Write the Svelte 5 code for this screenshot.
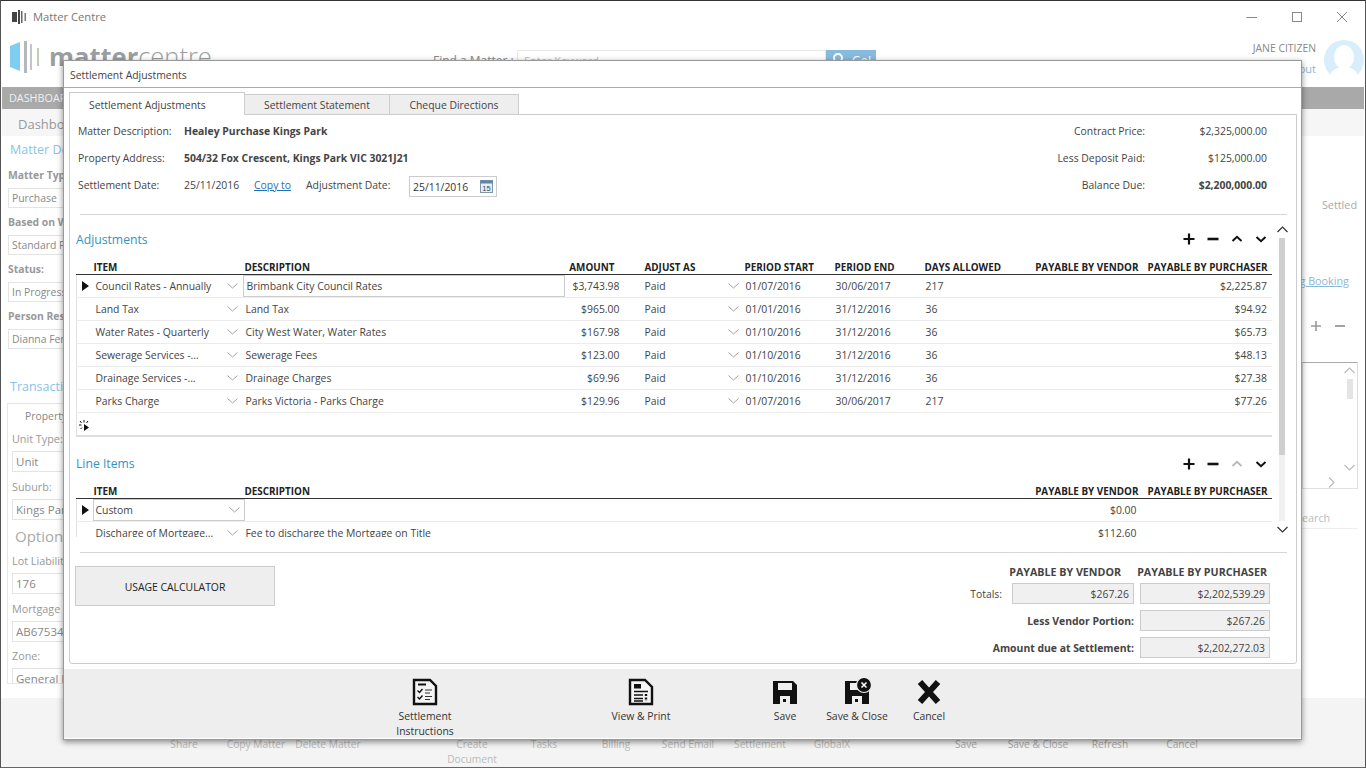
<script>
    const adjustments = [
        {item:'Council Rates - Annually', desc:'Brimbank City Council Rates', amount:'$3,743.98', start:'01/07/2016', end:'30/06/2017', days:'217', purchaser:'$2,225.87'},
        {item:'Land Tax', desc:'Land Tax', amount:'$965.00', start:'01/01/2016', end:'31/12/2016', days:'36', purchaser:'$94.92'},
        {item:'Water Rates - Quarterly', desc:'City West Water, Water Rates', amount:'$167.98', start:'01/10/2016', end:'31/12/2016', days:'36', purchaser:'$65.73'},
        {item:'Sewerage Services -...', desc:'Sewerage Fees', amount:'$123.00', start:'01/10/2016', end:'31/12/2016', days:'36', purchaser:'$48.13'},
        {item:'Drainage Services -...', desc:'Drainage Charges', amount:'$69.96', start:'01/10/2016', end:'31/12/2016', days:'36', purchaser:'$27.38'},
        {item:'Parks Charge', desc:'Parks Victoria - Parks Charge', amount:'$129.96', start:'01/07/2016', end:'30/06/2017', days:'217', purchaser:'$77.26'}
    ]
    const topFields = [
        {label:'Matter Type:', value:'Purchase'},
        {label:'Based on Whom:', value:'Standard Purchase'},
        {label:'Status:', value:'In Progress'},
        {label:'Person Responsible:', value:'Dianna Fenton'}
    ]
    const bottomLeft = ['Share', 'Copy Matter', 'Delete Matter', '', 'Create Document', 'Tasks', 'Billing', 'Send Email', 'Settlement', 'GlobalX']
    const bottomRight = ['Save', 'Save & Close', 'Refresh', 'Cancel']
</script>

{#snippet chevron()}
    <svg class="chev" width="11" height="6" viewBox="0 0 11 6"><path d="M0.5 0.5 L5.5 5 L10.5 0.5" fill="none" stroke="#a3a3a3" stroke-width="1"/></svg>
{/snippet}

{#snippet arrow()}
    <svg width="7" height="10" viewBox="0 0 7 10"><path d="M0 0 L7 5 L0 10 Z" fill="#111"/></svg>
{/snippet}

{#snippet tools(upDisabled)}
    <div class="tools">
        <svg width="12" height="12" viewBox="0 0 12 12"><path d="M6 0.5 V11.5 M0.5 6 H11.5" stroke="#111" stroke-width="2.2"/></svg>
        <svg width="12" height="12" viewBox="0 0 12 12"><path d="M0.5 6 H11.5" stroke="#111" stroke-width="2.6"/></svg>
        <svg width="12" height="12" viewBox="0 0 12 12"><path d="M1.5 8 L6 3.8 L10.5 8" fill="none" stroke={upDisabled?'#bbb':'#111'} stroke-width="2"/></svg>
        <svg width="12" height="12" viewBox="0 0 12 12"><path d="M1.5 4 L6 8.2 L10.5 4" fill="none" stroke="#111" stroke-width="2"/></svg>
    </div>
{/snippet}

<div class="window">
    <div class="titlebar">
        <svg width="16" height="14" viewBox="0 0 16 14"><rect x="0" y="2" width="5" height="10" fill="#444"/><rect x="6" y="0" width="2" height="14" fill="#444"/><rect x="9" y="1" width="1.5" height="12" fill="#666"/><rect x="12.5" y="3" width="1.5" height="8" fill="#777"/></svg>
        <span class="appname">Matter Centre</span>
        <div class="winctl">
            <svg width="12" height="12" viewBox="0 0 12 12"><path d="M0.5 6.5 H11" stroke="#888"/></svg>
            <svg width="12" height="12" viewBox="0 0 12 12"><rect x="1.5" y="1.5" width="9" height="9" fill="none" stroke="#888"/></svg>
            <svg width="12" height="12" viewBox="0 0 12 12"><path d="M1 1 L11 11 M11 1 L1 11" stroke="#888"/></svg>
        </div>
    </div>
    <div class="header">
        <svg class="logo" width="30" height="34" viewBox="0 0 30 34"><path d="M0 5 L10 1 V30 L0 26 Z" fill="#7fcdf0"/><rect x="14" y="0" width="3" height="32" fill="#b4b8ba"/><rect x="20" y="3" width="2" height="26" fill="#c2c6c8"/><rect x="27" y="7" width="2" height="18" fill="#bcd0b0"/></svg>
        <div class="brand"><b>matter</b><span>centre</span></div>
        <div class="find">
            <span>Find a Matter :</span>
            <div class="findbox">Enter Keyword</div>
            <div class="findbtn">
                <svg width="14" height="14" viewBox="0 0 14 14"><circle cx="6" cy="6" r="4" fill="none" stroke="#fff" stroke-width="2"/></svg>
                Go!
            </div>
        </div>
        <div class="user">
            <div class="username">
                <span>JANE CITIZEN</span>
                <span class="logout">Logout</span>
            </div>
            <svg width="40" height="40" viewBox="0 0 40 40"><circle cx="20" cy="20" r="20" fill="#d8eefb"/><ellipse cx="20" cy="17" rx="10" ry="12" fill="#fff"/><path d="M6 36 C8 29 14 27 20 27 C26 27 32 29 34 36 L28 40 H12 Z" fill="#fff"/></svg>
        </div>
    </div>
    <div class="nav">DASHBOARD</div>
    <div class="subnav">Dashboard</div>
    <div class="body">
        <div class="leftcol">
            <div class="bluehead">Matter Details</div>
            {#each topFields as f}
                <div class="field">
                    <div class="flabel bold">{f.label}</div>
                    <div class="finput">{f.value}</div>
                </div>
            {/each}
            <div class="bluehead trans">Transaction Details</div>
            <div class="panel">
                <div class="prop">Property Details</div>
                <div class="pfield"><div class="plabel">Unit Type:</div><div class="pinput first">Unit</div></div>
                <div class="pfield"><div class="plabel">Suburb:</div><div class="pinput">Kings Park</div></div>
                <div class="optional">Optional Details</div>
                <div class="pfield"><div class="plabel">Lot Liability:</div><div class="pinput">176</div></div>
                <div class="pfield"><div class="plabel">Mortgage No:</div><div class="pinput">AB6753421</div></div>
                <div class="pfield"><div class="plabel">Zone:</div><div class="pinput">General Residential</div></div>
            </div>
        </div>
        <div class="rightcol">
            <div class="settled">Settled</div>
            <div class="booking"><u>Settling Booking</u></div>
            <div class="plusminus">
                <svg width="12" height="12" viewBox="0 0 12 12"><path d="M6 1 V11 M1 6 H11" stroke="#999" stroke-width="1.6"/></svg>
                <svg width="12" height="12" viewBox="0 0 12 12"><path d="M1 6 H11" stroke="#999" stroke-width="1.8"/></svg>
            </div>
            <div class="listbox">
                <div class="listbar">
                    <svg width="11" height="7" viewBox="0 0 11 7"><path d="M0.5 6 L5.5 1 L10.5 6" fill="none" stroke="#bbb" stroke-width="1.2"/></svg>
                    <div class="listthumb"></div>
                    <svg width="11" height="7" viewBox="0 0 11 7"><path d="M0.5 1 L5.5 6 L10.5 1" fill="none" stroke="#bbb" stroke-width="1.2"/></svg>
                </div>
                <svg class="listright" width="7" height="11" viewBox="0 0 7 11"><path d="M1 0.5 L6 5.5 L1 10.5" fill="none" stroke="#bbb" stroke-width="1.2"/></svg>
            </div>
            <div class="rsearch">Search</div>
        </div>
    </div>
    <div class="appfoot">
        <div class="footlabels">
            <div class="footgroup">
                {#each bottomLeft as b}<div class="footitem">{b}</div>{/each}
            </div>
            <div class="footgroup dark">
                {#each bottomRight as b}<div class="footitem">{b}</div>{/each}
            </div>
        </div>
    </div>
    <div class="cutoff"></div>

    <div class="modal">
        <div class="modaltitle">Settlement Adjustments</div>
        <div class="tabs">
            <div class="tab active">Settlement Adjustments</div>
            <div class="tab">Settlement Statement</div>
            <div class="tab">Cheque Directions</div>
        </div>
        <div class="content">
            <div class="info">
                <div class="infoleft">
                    <div class="inforow"><span class="il">Matter Description:</span><b>Healey Purchase Kings Park</b></div>
                    <div class="inforow"><span class="il">Property Address:</span><b>504/32 Fox Crescent, Kings Park VIC 3021J21</b></div>
                    <div class="inforow">
                        <span class="il">Settlement Date:</span>
                        <span class="sdate">25/11/2016</span>
                        <a href="#copy" class="copy">Copy to</a>
                        <span class="adj">Adjustment Date:</span>
                        <div class="dateinput">
                            25/11/2016
                            <svg width="13" height="13" viewBox="0 0 13 13"><rect x="0.5" y="0.5" width="12" height="12" fill="#e8eef4" stroke="#7f97ad"/><rect x="0.5" y="0.5" width="12" height="3" fill="#5f84a8"/><text x="6.5" y="11" font-size="7.5" font-family="Liberation Sans" text-anchor="middle" fill="#345">15</text></svg>
                        </div>
                    </div>
                </div>
                <div class="inforight">
                    <span>Contract Price:</span><span class="iv">$2,325,000.00</span>
                    <span>Less Deposit Paid:</span><span class="iv">$125,000.00</span>
                    <span>Balance Due:</span><b class="iv">$2,200,000.00</b>
                </div>
            </div>
            <div class="rule first"></div>

            <div class="scrollarea">
                <div class="scrollcontent">
                    <div class="sectionhead">
                        <span class="sectitle">Adjustments</span>
                        {@render tools(false)}
                    </div>
                    <table class="grid adjtable">
                        <colgroup><col style="width:17px"><col style="width:151px"><col style="width:320px"><col style="width:55px"><col style="width:125px"><col style="width:90px"><col style="width:90px"><col style="width:90px"><col style="width:124px"><col style="width:134px"></colgroup>
                        <thead>
                            <tr>
                                <th></th><th>ITEM</th><th>DESCRIPTION</th><th class="r amt">AMOUNT</th><th class="padadj">ADJUST AS</th><th>PERIOD START</th><th>PERIOD END</th><th>DAYS ALLOWED</th><th class="r">PAYABLE BY VENDOR</th><th class="r pp">PAYABLE BY PURCHASER</th>
                            </tr>
                        </thead>
                        <tbody>
                            {#each adjustments as row, i}
                                <tr>
                                    <td class="ind">{#if i===0}{@render arrow()}{/if}</td>
                                    <td class="itemcell"><div class="combo"><span>{row.item}</span>{@render chevron()}</div></td>
                                    <td class={i===0?'selcell':''}><div class={i===0?'selbox':''}>{row.desc}</div></td>
                                    <td class="r">{row.amount}</td>
                                    <td class="padadj"><div class="combo adjcombo"><span>Paid</span>{@render chevron()}</div></td>
                                    <td>{row.start}</td>
                                    <td>{row.end}</td>
                                    <td>{row.days}</td>
                                    <td class="r"></td>
                                    <td class="r pp">{row.purchaser}</td>
                                </tr>
                            {/each}
                            <tr class="newrow">
                                <td class="ind">
                                    <svg class="spark" width="11" height="11" viewBox="0 0 11 11"><path d="M5 4 L10 7.5 L5 11 Z" fill="#111"/><path d="M1 1 L2.5 3 M5 0 V2.5 M9 1 L7.5 3 M0 5 H2.5 M1.5 9 L3 7.5" stroke="#111" stroke-width="1"/></svg>
                                </td>
                                <td colspan="9"></td>
                            </tr>
                        </tbody>
                    </table>

                    <div class="sectionhead line">
                        <span class="sectitle">Line Items</span>
                        {@render tools(true)}
                    </div>
                    <table class="grid linetable">
                        <colgroup><col style="width:17px"><col style="width:151px"><col style="width:770px"><col style="width:124px"><col style="width:134px"></colgroup>
                        <thead>
                            <tr><th></th><th>ITEM</th><th>DESCRIPTION</th><th class="r">PAYABLE BY VENDOR</th><th class="r pp">PAYABLE BY PURCHASER</th></tr>
                        </thead>
                        <tbody>
                            <tr>
                                <td class="ind">{@render arrow()}</td>
                                <td class="selcell"><div class="selbox combo"><span>Custom</span>{@render chevron()}</div></td>
                                <td></td>
                                <td class="r v2">$0.00</td>
                                <td></td>
                            </tr>
                            <tr>
                                <td class="ind"></td>
                                <td class="itemcell"><div class="combo"><span>Discharge of Mortgage...</span>{@render chevron()}</div></td>
                                <td>Fee to discharge the Mortgage on Title</td>
                                <td class="r v2">$112.60</td>
                                <td></td>
                            </tr>
                        </tbody>
                    </table>
                </div>
                <div class="scrollbar">
                    <svg width="11" height="7" viewBox="0 0 11 7"><path d="M0.5 6 L5.5 1 L10.5 6" fill="none" stroke="#333" stroke-width="1.2"/></svg>
                    <div class="track"><div class="thumb"></div></div>
                    <svg width="11" height="7" viewBox="0 0 11 7"><path d="M0.5 1 L5.5 6 L10.5 1" fill="none" stroke="#333" stroke-width="1.2"/></svg>
                </div>
            </div>
            <div class="rule second"></div>

            <div class="summary">
                <button class="usage">USAGE CALCULATOR</button>
                <div class="totals">
                    <div class="th th1">PAYABLE BY VENDOR</div>
                    <div class="th th2">PAYABLE BY PURCHASER</div>
                    <div class="tlabel">Totals:</div>
                    <div class="tbox">$267.26</div>
                    <div class="tbox">$2,202,539.29</div>
                    <div class="tbold">Less Vendor Portion:</div>
                    <div class="tbox">$267.26</div>
                    <div class="tbold">Amount due at Settlement:</div>
                    <div class="tbox">$2,202,272.03</div>
                </div>
            </div>
        </div>
        <div class="actions">
            <div class="action first">
                <svg width="26" height="28" viewBox="0 0 26 28">
                    <path d="M2 2 H18 L24 8 V26 H2 Z" fill="#f4f4f4" stroke="#111" stroke-width="2.4"/>
                    <path d="M6 6.5 H14" stroke="#111" stroke-width="2"/>
                    <path d="M5.5 12.5 L7.5 14.5 L10.5 11 M5.5 19 L7.5 21 L10.5 17.5" fill="none" stroke="#111" stroke-width="1.4"/>
                    <path d="M13 12 H20 M13 15 H18 M13 18.5 H20 M13 21.5 H18" stroke="#333" stroke-width="1.2"/>
                </svg>
                <span>Settlement Instructions</span>
            </div>
            <div class="action view">
                <svg width="26" height="28" viewBox="0 0 26 28">
                    <path d="M2 2 H17 L24 9 V26 H2 Z" fill="#f4f4f4" stroke="#111" stroke-width="2.4"/>
                    <rect x="6" y="6" width="7" height="4.5" fill="#111"/>
                    <path d="M6 13.5 H20 M6 17 H15 M6 20.5 H15 M6 23 H15" stroke="#111" stroke-width="1.6"/>
                    <path d="M18 16 V23" stroke="#111" stroke-width="2.4" stroke-dasharray="2 1.4"/>
                </svg>
                <span>View &amp; Print</span>
            </div>
            <div class="action save">
                <svg width="26" height="28" viewBox="0 0 26 28">
                    <path d="M1 3 H21 L25 7 V26 H1 Z" fill="#111"/>
                    <rect x="6" y="5" width="14" height="7" fill="#eee"/>
                    <rect x="8" y="18" width="10" height="8" fill="#eee"/>
                    <rect x="11" y="21" width="3" height="3" fill="#111"/>
                </svg>
                <span>Save</span>
            </div>
            <div class="action">
                <svg width="30" height="28" viewBox="0 0 30 28">
                    <path d="M3 3 H23 L27 7 V26 H3 Z" fill="#111"/>
                    <rect x="8" y="5" width="14" height="7" fill="#eee"/>
                    <rect x="10" y="18" width="10" height="8" fill="#eee"/>
                    <rect x="13" y="21" width="3" height="3" fill="#111"/>
                    <circle cx="22" cy="7" r="7.5" fill="#111" stroke="#eee" stroke-width="1.2"/>
                    <path d="M19.5 4.5 L24.5 9.5 M24.5 4.5 L19.5 9.5" stroke="#fff" stroke-width="1.6"/>
                </svg>
                <span>Save &amp; Close</span>
            </div>
            <div class="action">
                <svg width="26" height="28" viewBox="0 0 26 28">
                    <path d="M4 4 L22 24 M22 4 L4 24" stroke="#111" stroke-width="6"/>
                </svg>
                <span>Cancel</span>
            </div>
        </div>
    </div>
</div>

<style>
    :global(body){
        margin: 0;
        background: #fff;
    }
    .window{
        position: relative;
        display: flex;
        flex-direction: column;
        width: 1366px;
        height: 768px;
        box-sizing: border-box;
        overflow: hidden;
        border-top: 1px solid #333;
        border-left: 1px solid #555;
        border-right: 1px solid #555;
        background: #fff;
        font-family: "Open Sans", "Noto Sans", sans-serif;
        font-size: 10.4px;
        color: #444;
    }
    .titlebar{
        display: flex;
        align-items: center;
        height: 31px;
        flex: none;
        padding-left: 11px;
        gap: 5px;
    }
    .appname{
        font-size: 11.2px;
        color: #777;
    }
    .winctl{
        display: flex;
        margin-left: auto;
        margin-right: 17px;
        gap: 33px;
    }
    .header{
        display: flex;
        height: 55px;
        flex: none;
        align-items: flex-start;
        padding-left: 9px;
    }
    .logo{
        margin-top: 9px;
    }
    .brand{
        margin: 6px 0 0 9px;
        width: 384px;
        font-size: 25.5px;
        line-height: 36px;
        color: #9a9ea2;
    }
    .brand b{
        font-weight: 700;
    }
    .brand span{
        font-weight: 300;
    }
    .find{
        display: flex;
        align-items: flex-start;
        color: #888;
        font-size: 12px;
    }
    .find span{
        width: 84px;
        margin-top: 20px;
    }
    .findbox{
        box-sizing: border-box;
        width: 309px;
        height: 30px;
        margin-top: 18px;
        padding: 2px 6px;
        border: 1px solid #e8e8e8;
        color: #bbb;
        font-size: 11px;
    }
    .findbtn{
        display: flex;
        align-items: flex-start;
        gap: 6px;
        width: 50px;
        height: 30px;
        margin-top: 18px;
        padding: 2px 0 0 6px;
        box-sizing: border-box;
        background: #87bbdd;
        color: #fff;
    }
    .user{
        display: flex;
        margin-left: auto;
        margin-right: 1px;
        margin-top: 8px;
        gap: 8px;
    }
    .username{
        display: flex;
        flex-direction: column;
        align-items: flex-end;
        gap: 6px;
        padding-top: 1px;
        font-size: 10.4px;
        color: #888;
    }
    .logout{
        color: #89b8d8;
        font-size: 11px;
    }
    .nav{
        flex: none;
        height: 22px;
        line-height: 22px;
        margin: 0 1px;
        padding-left: 7px;
        background: #a9a9a9;
        color: #f0f0f0;
        font-size: 10.8px;
    }
    .subnav{
        flex: none;
        height: 27px;
        line-height: 31px;
        margin: 0 1px;
        padding-left: 16px;
        background: #f6f6f6;
        color: #999;
        font-size: 13px;
    }
    .body{
        display: flex;
        justify-content: space-between;
        flex: none;
        height: 562px;
        overflow: hidden;
    }
    .leftcol{
        width: 200px;
        padding: 5px 0 0 7px;
        box-sizing: border-box;
    }
    .bluehead{
        height: 18px;
        line-height: 18px;
        margin: 0 0 3px 2px;
        color: #89c4e4;
        font-size: 12.5px;
    }
    .bluehead.trans{
        margin: 29px 0 7px 2px;
    }
    .field{
        margin-bottom: 1px;
    }
    .flabel{
        height: 26px;
        line-height: 26px;
        color: #999;
    }
    .bold{
        font-weight: 700;
    }
    .finput{
        box-sizing: border-box;
        height: 20px;
        line-height: 18px;
        padding-left: 3px;
        border: 1px solid #e4e4e4;
        color: #888;
    }
    .panel{
        height: 281px;
        margin-left: -1px;
        padding-left: 4px;
        border: 1px solid #e6e6e6;
        box-sizing: border-box;
        overflow: hidden;
    }
    .prop{
        height: 23px;
        line-height: 24px;
        padding-left: 13px;
        color: #888;
    }
    .plabel{
        height: 24px;
        line-height: 24px;
        color: #999;
        font-size: 10.8px;
    }
    .pinput{
        box-sizing: border-box;
        height: 21px;
        margin-bottom: 2.5px;
        line-height: 19px;
        padding-left: 3px;
        border: 1px solid #e4e4e4;
        color: #888;
        font-size: 11.5px;
    }
    .optional{
        height: 27px;
        padding: 4px 0 0 3px;
        box-sizing: border-box;
        font-size: 15px;
        line-height: 20px;
        color: #aaa;
    }
    .rightcol{
        position: relative;
        display: flex;
        flex-direction: column;
        align-items: flex-end;
        width: 64px;
        padding-right: 7px;
        box-sizing: border-box;
    }
    .settled{
        margin-top: 61px;
        padding-right: 1px;
        line-height: 16px;
        color: #aaa;
        font-size: 10.8px;
    }
    .booking{
        margin-top: 60px;
        padding-right: 9px;
        line-height: 16px;
        color: #89b8d8;
        white-space: nowrap;
        font-size: 10.8px;
    }
    .plusminus{
        display: flex;
        gap: 12px;
        margin-top: 31px;
        padding-right: 12px;
    }
    .listbox{
        position: relative;
        width: 56px;
        height: 127px;
        margin-top: 30px;
        border: 1px solid #e0e0e0;
        border-top-color: #aaa;
        border-right-color: #ddd;
        box-sizing: border-box;
    }
    .listbar{
        display: flex;
        flex-direction: column;
        align-items: center;
        gap: 5px;
        position: absolute;
        top: 4px;
        right: 2px;
    }
    .listthumb{
        width: 6px;
        height: 20px;
        margin-bottom: 60px;
        background: #e4e4e4;
    }
    .listright{
        position: absolute;
        right: 22px;
        bottom: 0;
    }
    .rsearch{
        width: 62px;
        height: 20px;
        margin-top: 20px;
        box-sizing: border-box;
        border-bottom: 1px solid #eee;
        color: #bbb;
        line-height: 18px;
        font-size: 10.8px;
    }
    .appfoot{
        flex: none;
        height: 69px;
        background: #f4f4f4;
    }
    .footlabels{
        display: flex;
        padding-left: 147px;
    }
    .footgroup{
        display: flex;
        color: #bbb;
        text-align: center;
    }
    .footgroup.dark{
        margin-left: 62px;
        color: #aaa;
    }
    .footitem{
        width: 72px;
        line-height: 15px;
        padding-top: 39px;
        font-size: 10.2px;
    }
    .cutoff{
        flex: none;
        height: 1px;
        background: #666;
    }

    .modal{
        position: absolute;
        top: 59px;
        left: 62px;
        display: flex;
        flex-direction: column;
        width: 1239px;
        height: 680px;
        box-sizing: border-box;
        padding-left: 1px;
        border: 1px solid #999;
        background: #fff;
        box-shadow: 0 2px 6px rgba(0,0,0,0.45);
    }
    .modaltitle{
        flex: none;
        height: 26px;
        line-height: 28px;
        padding-left: 6px;
        border-bottom: 1px solid #aaa;
        margin-left: -1px;
        color: #444;
    }
    .tabs{
        display: flex;
        align-items: flex-end;
        flex: none;
        height: 27px;
        margin: 0 0 -1px 4px;
        position: relative;
        z-index: 1;
    }
    .tab{
        box-sizing: border-box;
        height: 21px;
        line-height: 21px;
        border: 1px solid #ccc;
        border-left-width: 0;
        background: #eee;
        text-align: center;
    }
    .tab:nth-child(2){
        width: 145px;
    }
    .tab:nth-child(3){
        width: 129px;
    }
    .tab.active{
        width: 176px;
        height: 23px;
        line-height: 25px;
        padding-left: 19px;
        border-width: 1px 1px 0 1px;
        background: #fff;
        text-align: left;
    }
    .content{
        flex: none;
        box-sizing: border-box;
        width: 1228px;
        height: 550px;
        margin-left: 4px;
        border: 1px solid #ccc;
        border-radius: 0 0 3px 3px;
    }
    .info{
        display: flex;
        justify-content: space-between;
        padding: 2px 29px 0 8px;
    }
    .inforow{
        display: flex;
        align-items: center;
        height: 27px;
    }
    .il{
        width: 106px;
    }
    .sdate{
        width: 70px;
    }
    .copy{
        width: 52px;
        color: #1f6fb5;
    }
    .adj{
        width: 103px;
    }
    .dateinput{
        display: flex;
        align-items: center;
        justify-content: space-between;
        box-sizing: border-box;
        width: 88px;
        height: 21px;
        padding: 0 3px;
        margin-top: 4px;
        border: 1px solid #ccc;
        color: #333;
    }
    .inforight{
        display: grid;
        grid-template-columns: auto 122px;
        grid-auto-rows: 27px;
        align-items: center;
        justify-items: end;
    }
    .rule{
        height: 1px;
        background: #d6d6d6;
        margin: 0 9px 0 10px;
    }
    .rule.first{
        margin-top: 16px;
    }
    .rule.second{
        margin-top: 15px;
    }
    .scrollarea{
        display: flex;
        gap: 3px;
        height: 315px;
        margin-top: 7px;
        padding-left: 6px;
    }
    .scrollcontent{
        width: 1196px;
        overflow: hidden;
    }
    .sectionhead{
        display: flex;
        align-items: center;
        justify-content: space-between;
        height: 18px;
        margin-top: 8px;
        margin-bottom: 13px;
    }
    .sectionhead.line{
        margin-top: 18px;
        margin-bottom: 12px;
    }
    .sectitle{
        color: #2f95c4;
        font-size: 12.2px;
    }
    .tools{
        display: flex;
        gap: 12px;
        padding-right: 5px;
    }
    .grid{
        width: 1196px;
        table-layout: fixed;
        border-collapse: collapse;
        color: #444;
    }
    .grid th{
        height: 13px;
        padding: 0;
        border-bottom: 1.5px solid #333;
        text-align: left;
        vertical-align: top;
        font-size: 9.9px;
        font-weight: 700;
        line-height: 12px;
        color: #222;
        white-space: nowrap;
    }
    .grid td{
        height: 23px;
        padding: 0 0 0 1px;
        box-sizing: border-box;
        border-bottom: 1px solid #ececec;
        white-space: nowrap;
    }
    .grid td.ind{
        padding-left: 5px;
        border-left: 1px solid #e2e2e2;
        line-height: 0;
    }
    .grid td.itemcell{
        padding-left: 0;
    }
    .adjtable tbody tr > td:last-child{
        border-right: 1px solid #e2e2e2;
    }
    .grid .r{
        text-align: right;
    }
    .grid th.amt{
        padding-right: 5px;
    }
    .grid .pp{
        padding-right: 5px;
    }
    .grid .v2{
        padding-right: 2px;
    }
    .grid .padadj{
        padding-left: 25px;
    }
    .newrow td{
        border-bottom: 2px solid #ddd;
    }
    .spark{
        margin: 3px 0 0 -3px;
    }
    .combo{
        display: flex;
        align-items: center;
        justify-content: space-between;
        padding-right: 7px;
        padding-left: 2px;
    }
    .adjcombo{
        padding-left: 0;
        padding-right: 6px;
    }
    .chev{
        flex: none;
    }
    .grid td.selcell{
        padding-left: 0;
    }
    .selbox{
        box-sizing: border-box;
        height: 22px;
        line-height: 20px;
        padding-left: 3px;
        margin-left: -2px;
        border: 1px solid #ccc;
    }
    .selbox.combo{
        display: flex;
        margin-left: -1px;
        padding-left: 2px;
        padding-right: 4px;
    }
    .scrollbar{
        display: flex;
        flex-direction: column;
        align-items: center;
        width: 14px;
        padding-top: 4px;
        gap: 5px;
    }
    .track{
        width: 6px;
        height: 283px;
        background: #f1f1f1;
    }
    .thumb{
        height: 217px;
        background: #cfcfcf;
    }
    .summary{
        display: flex;
        justify-content: space-between;
        padding: 12px 26px 0 5px;
    }
    .usage{
        box-sizing: border-box;
        width: 200px;
        height: 40px;
        margin-top: 1px;
        padding-top: 3px;
        border: 1px solid #ccc;
        background: #eee;
        font: inherit;
        color: #222;
    }
    .totals{
        display: grid;
        grid-template-columns: auto 122px 130px;
        grid-template-rows: 12px repeat(3, 21px);
        column-gap: 6px;
        row-gap: 6px;
        align-items: center;
    }
    .th{
        padding-top: 1px;
        font-size: 10.7px;
        font-weight: 700;
        color: #444;
        white-space: nowrap;
        text-align: right;
    }
    .th1{
        grid-column: 1 / 3;
        padding-right: 13px;
        justify-self: end;
    }
    .th2{
        grid-column: 3;
        padding-right: 3px;
        justify-self: end;
    }
    .tlabel{
        justify-self: end;
        padding-right: 4px;
    }
    .tbold{
        grid-column: 1 / 3;
        justify-self: end;
        padding-top: 1px;
        font-weight: 700;
    }
    .tbox{
        box-sizing: border-box;
        height: 21px;
        line-height: 21px;
        padding-right: 4px;
        border: 1px solid #ccc;
        background: #f0f0f0;
        text-align: right;
    }
    .actions{
        display: flex;
        flex: none;
        height: 69px;
        margin-top: 5px;
        margin-left: -1px;
        padding-left: 325px;
        background: #eee;
    }
    .action{
        display: flex;
        flex-direction: column;
        align-items: center;
        width: 72px;
        padding-top: 9px;
        text-align: center;
        line-height: 15px;
        color: #333;
    }
    .action svg{
        flex: none;
    }
    .action span{
        margin-top: 3px;
    }
    .action.view{
        margin-left: 144px;
    }
    .action.save{
        margin-left: 72px;
    }
</style>
